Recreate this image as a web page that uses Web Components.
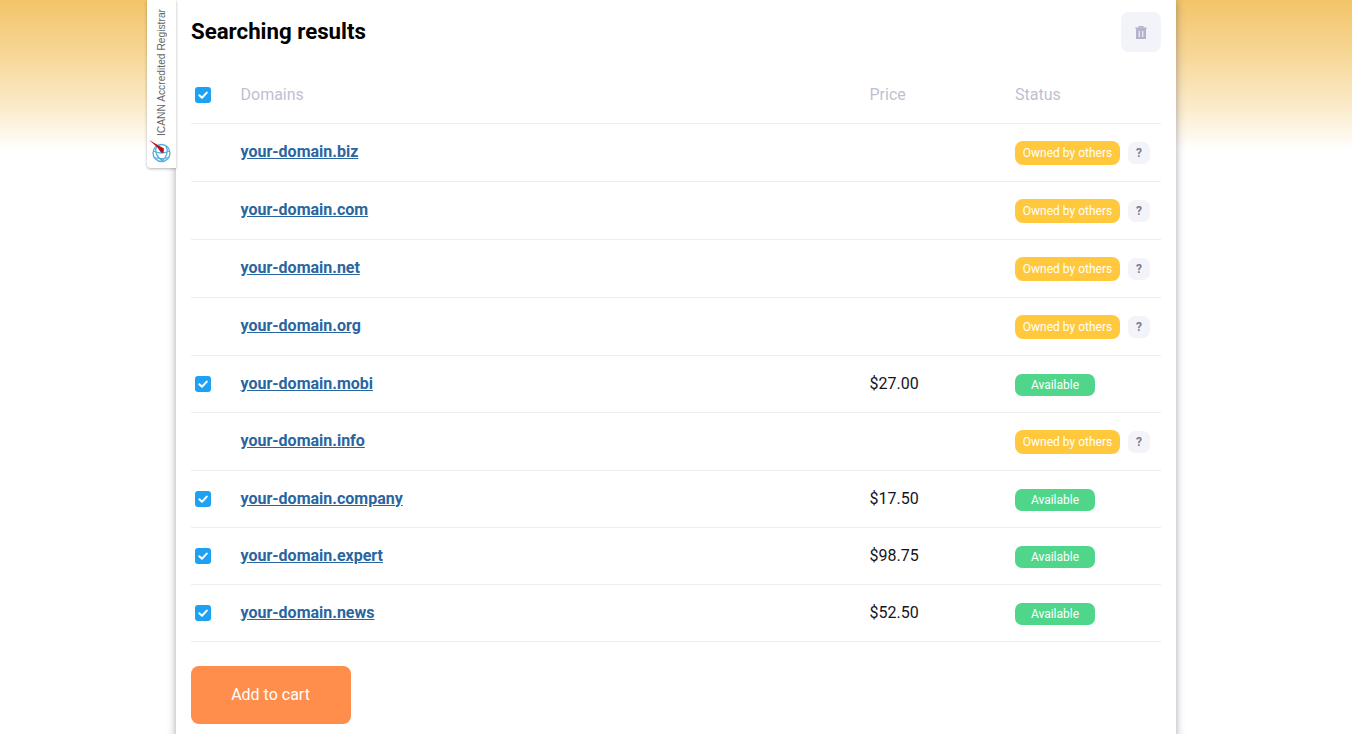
<!DOCTYPE html>
<html lang="en">
<head>
<meta charset="utf-8">
<title>Searching results</title>
<style>
	html, body {
		margin: 0;
		height: 734px;
		overflow: hidden;
	}

	body {
		font-family: Roboto, "Liberation Sans", sans-serif;
		background: linear-gradient(#f3c469 0, #f6d592 50px, #fbeccd 110px, #fff 150px);
	}
</style>
</head>
<body>
<results-card>
	<icann-tab slot="tab"></icann-tab>
	<span slot="title">Searching results</span>
	<trash-button slot="action"></trash-button>

	<domain-row head domain="Domains" price="Price" status="Status" checked></domain-row>
	<domain-row domain="your-domain.biz"></domain-row>
	<domain-row domain="your-domain.com"></domain-row>
	<domain-row domain="your-domain.net"></domain-row>
	<domain-row domain="your-domain.org"></domain-row>
	<domain-row domain="your-domain.mobi" price="$27.00" status="available" checked></domain-row>
	<domain-row domain="your-domain.info"></domain-row>
	<domain-row domain="your-domain.company" price="$17.50" status="available" checked></domain-row>
	<domain-row domain="your-domain.expert" price="$98.75" status="available" checked></domain-row>
	<domain-row domain="your-domain.news" price="$52.50" status="available" checked></domain-row>

	<cart-button slot="footer">Add to cart</cart-button>
</results-card>

<script>
	const CHECK = `
		<svg width="16" height="16" viewBox="0 0 16 16">
			<rect width="16" height="16" rx="3" fill="#1da1f2"/>
			<path d="M4.3 8.2 7 10.7 11.8 5.6" fill="none" stroke="#fff" stroke-width="2" stroke-linecap="round" stroke-linejoin="round"/>
		</svg>`;

	customElements.define('results-card', class extends HTMLElement {
		constructor() {
			super();
			this.attachShadow({ mode: 'open' }).innerHTML = `
				<style>
					:host {
						display: block;
						position: relative;
						box-sizing: border-box;
						width: 1000px;
						height: 760px;
						margin: 0 auto;
						padding: 0 15px;
						background: #fff;
						box-shadow: 0 0 8px rgba(60, 50, 80, .45);
					}
					.top {
						display: flex;
						justify-content: space-between;
						align-items: center;
						height: 64px;
					}
					h1 {
						margin: 0 0 2px;
						font: 700 22.25px/28px Roboto, sans-serif;
						color: #000;
					}
					.footer {
						padding-top: 24px;
					}
				</style>
				<slot name="tab"></slot>
				<div class="top">
					<h1><slot name="title"></slot></h1>
					<slot name="action"></slot>
				</div>
				<slot></slot>
				<div class="footer"><slot name="footer"></slot></div>
			`;
		}
	});

	customElements.define('icann-tab', class extends HTMLElement {
		constructor() {
			super();
			this.attachShadow({ mode: 'open' }).innerHTML = `
				<style>
					:host {
						position: absolute;
						left: -29px;
						top: 0;
						width: 29px;
						height: 168px;
						background: #fff;
						border-radius: 0 0 0 4px;
						box-shadow: 0 1px 3px rgba(0, 0, 0, .3);
						display: block;
					}
					span {
						position: absolute;
						left: 7px;
						bottom: 32px;
						writing-mode: vertical-rl;
						transform: rotate(180deg);
						font: 10.25px/15px "Liberation Sans", sans-serif;
						color: #666;
						white-space: nowrap;
					}
					svg {
						position: absolute;
						left: 2px;
						bottom: 4px;
					}
				</style>
				<span>ICANN Accredited Registrar</span>
				<svg width="24" height="24" viewBox="0 0 24 24">
					<g fill="none" stroke="#55aede" stroke-width="1.3">
						<circle cx="12.5" cy="13" r="8.5"/>
						<path d="M8 6c-3 5 0 12 6 15M17 6c2.500 5 1 11-4 15M4.500 11c5 2.500 11 2.500 16 0M5 17.500c5 1.500 10 1.500 15 0"/>
					</g>
					<path d="M0 0 7 4 15 8.500 14.500 13 12 12.500 8 7z" fill="#b5121b"/>
				</svg>
			`;
		}
	});

	customElements.define('trash-button', class extends HTMLElement {
		constructor() {
			super();
			this.attachShadow({ mode: 'open' }).innerHTML = `
				<style>
					:host {
						display: flex;
						align-items: center;
						justify-content: center;
						width: 40px;
						height: 40px;
						border-radius: 8px;
						background: #f3f4f9;
					}
				</style>
				<svg width="12" height="13" viewBox="0 0 12 13">
					<path d="M4 1.500V.6h4v.9M.5 2h11" fill="none" stroke="#b3b3cb" stroke-width="1.1"/>
					<path fill-rule="evenodd" d="M.5 2h11v1H11v10H1V3H.5zM3.700 5v6h1.100V5zM7.200 5v6h1.100V5z" fill="#b3b3cb"/>
				</svg>
			`;
		}
	});

	customElements.define('domain-row', class extends HTMLElement {
		constructor() {
			super();
			const
				head = this.hasAttribute('head'),
				domain = this.getAttribute('domain'),
				price = this.getAttribute('price') || '',
				status = this.getAttribute('status') || 'owned',
				checked = this.hasAttribute('checked');

			let statusHtml;
			if (head) {
				statusHtml = status;
			} else if (status === 'available') {
				statusHtml = '<span class="badge green">Available</span>';
			} else {
				statusHtml = '<span class="badge yellow">Owned by others</span><span class="help">?</span>';
			}

			this.attachShadow({ mode: 'open' }).innerHTML = `
				<style>
					:host {
						display: grid;
						grid-template-columns: 49.5px 629px 145.5px 1fr;
						align-items: center;
						box-sizing: border-box;
						height: ${head ? 60 : status === 'available' ? 57 : 58}px;
						padding-bottom: 2px;
						border-bottom: 1px solid #ecedf2;
						font-size: 16px;
						color: #14141e;
					}
					:host([head]) {
						padding: 2px 0 0;
						color: #bfbfd2;
					}
					.check {
						display: flex;
						padding: 1px 0 0 4px;
					}
					a {
						font-weight: 700;
						color: #2a659f;
						text-decoration: underline;
					}
					.status {
						display: flex;
						align-items: center;
					}
					.badge {
						display: flex;
						align-items: center;
						justify-content: center;
						font-size: 12px;
						color: #fff;
						margin-top: 2px;
					}
					.yellow {
						width: 105px;
						height: 24px;
						border-radius: 8px;
						background: #ffc83d;
					}
					.green {
						width: 80px;
						height: 22px;
						margin-top: 4px;
						border-radius: 7px;
						background: #4fd68a;
					}
					.help {
						display: flex;
						align-items: center;
						justify-content: center;
						width: 22px;
						height: 22px;
						margin: 2px 0 0 8px;
						border-radius: 7px;
						background: #f3f4f9;
						font-size: 12px;
						font-weight: 700;
						color: #7a7a90;
					}
				</style>
				<div class="check">${checked ? CHECK : ''}</div>
				<div>${head ? domain : `<a href="#">${domain}</a>`}</div>
				<div>${price}</div>
				<div class="status">${statusHtml}</div>
			`;
		}
	});

	customElements.define('cart-button', class extends HTMLElement {
		constructor() {
			super();
			this.attachShadow({ mode: 'open' }).innerHTML = `
				<style>
					:host {
						display: flex;
						align-items: center;
						justify-content: center;
						box-sizing: border-box;
						width: 160px;
						height: 58px;
						padding: 0 1px 2px 0;
						border-radius: 8px;
						background: #ff8d4b;
						color: #fff;
						font-size: 16px;
					}
				</style>
				<slot></slot>
			`;
		}
	});
</script>
</body>
</html>
